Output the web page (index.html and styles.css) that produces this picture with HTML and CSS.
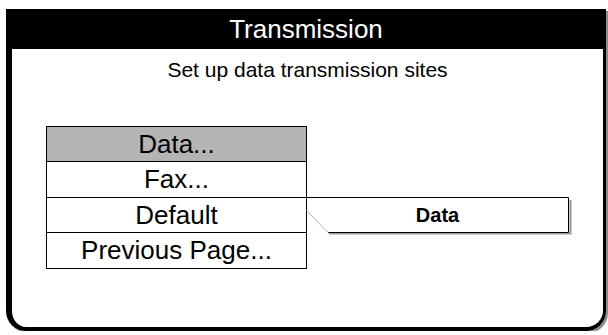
FILE: index.html
```html
<!DOCTYPE html>
<html>
<head>
<meta charset="utf-8">
<link rel="stylesheet" href="styles.css">
</head>
<body>
<div class="frame">
  <div class="titlebar">Transmission</div>
  <div class="content">
    <div class="subtitle">Set up data transmission sites</div>
    <div class="menu-wrap">
      <div class="menu">
        <div class="row selected">Data...</div>
        <div class="row">Fax...</div>
        <div class="row">Default</div>
        <div class="row">Previous Page...</div>
      </div>
      <div class="popup">
        <svg class="popup-shape" width="270" height="40" viewBox="0 0 270 40">
          <polyline points="23,36.5 264.5,36.5 264.5,3" fill="none" stroke="#9a9a9a" stroke-width="2"/>
          <polyline points="0,0.5 262.5,0.5 262.5,35.5 22,35.5" fill="none" stroke="#000" stroke-width="1"/>
          <line x1="0.5" y1="13.5" x2="22" y2="35.5" stroke="#b0b0b0" stroke-width="1"/>
        </svg>
        <span class="popup-label">Data</span>
      </div>
    </div>
  </div>
</div>
</body>
</html>
```

FILE: styles.css
```css
html, body {
  margin: 0;
  padding: 0;
  background: #fff;
}
body {
  font-family: "Liberation Sans", Arial, sans-serif;
  color: #000;
  padding: 9px 0 0 6px;
}
.frame {
  box-sizing: border-box;
  width: 600px;
  height: 322px;
  border-left: 6px solid #000;
  border-right: 3px solid #000;
  border-bottom: 4px solid #000;
  border-radius: 0 0 20px 20px;
  box-shadow: 2px 2px 0 #8c8c8c;
  display: flex;
  flex-direction: column;
}
.titlebar {
  background: #000;
  color: #fff;
  height: 40px;
  line-height: 40px;
  font-size: 26px;
  text-align: center;
  margin-left: -6px;
  margin-right: -3px;
}
.content {
  padding-top: 9px;
}
.subtitle {
  font-size: 21px;
  line-height: 24px;
  text-align: center;
}
.menu-wrap {
  position: relative;
  margin-top: 44px;
  margin-left: 34px;
}
.menu {
  width: 261px;
  box-sizing: border-box;
  border: 1px solid #000;
}
.row {
  height: 35px;
  line-height: 35px;
  font-size: 26px;
  text-align: center;
  border-top: 1px solid #000;
}
.row:first-child {
  border-top: 0;
  height: 34px;
  line-height: 34px;
}
.row:nth-child(3) {
  height: 34px;
  line-height: 34px;
}
.selected {
  background: #b4b4b4;
}
.popup {
  position: absolute;
  left: 260px;
  top: 71px;
  width: 263px;
  height: 36px;
}
.popup-shape {
  position: absolute;
  left: 0;
  top: 0;
}
.popup-label {
  position: absolute;
  left: 0;
  top: 0;
  width: 263px;
  height: 36px;
  line-height: 36px;
  text-align: center;
  font-weight: bold;
  font-size: 20px;
}
```
